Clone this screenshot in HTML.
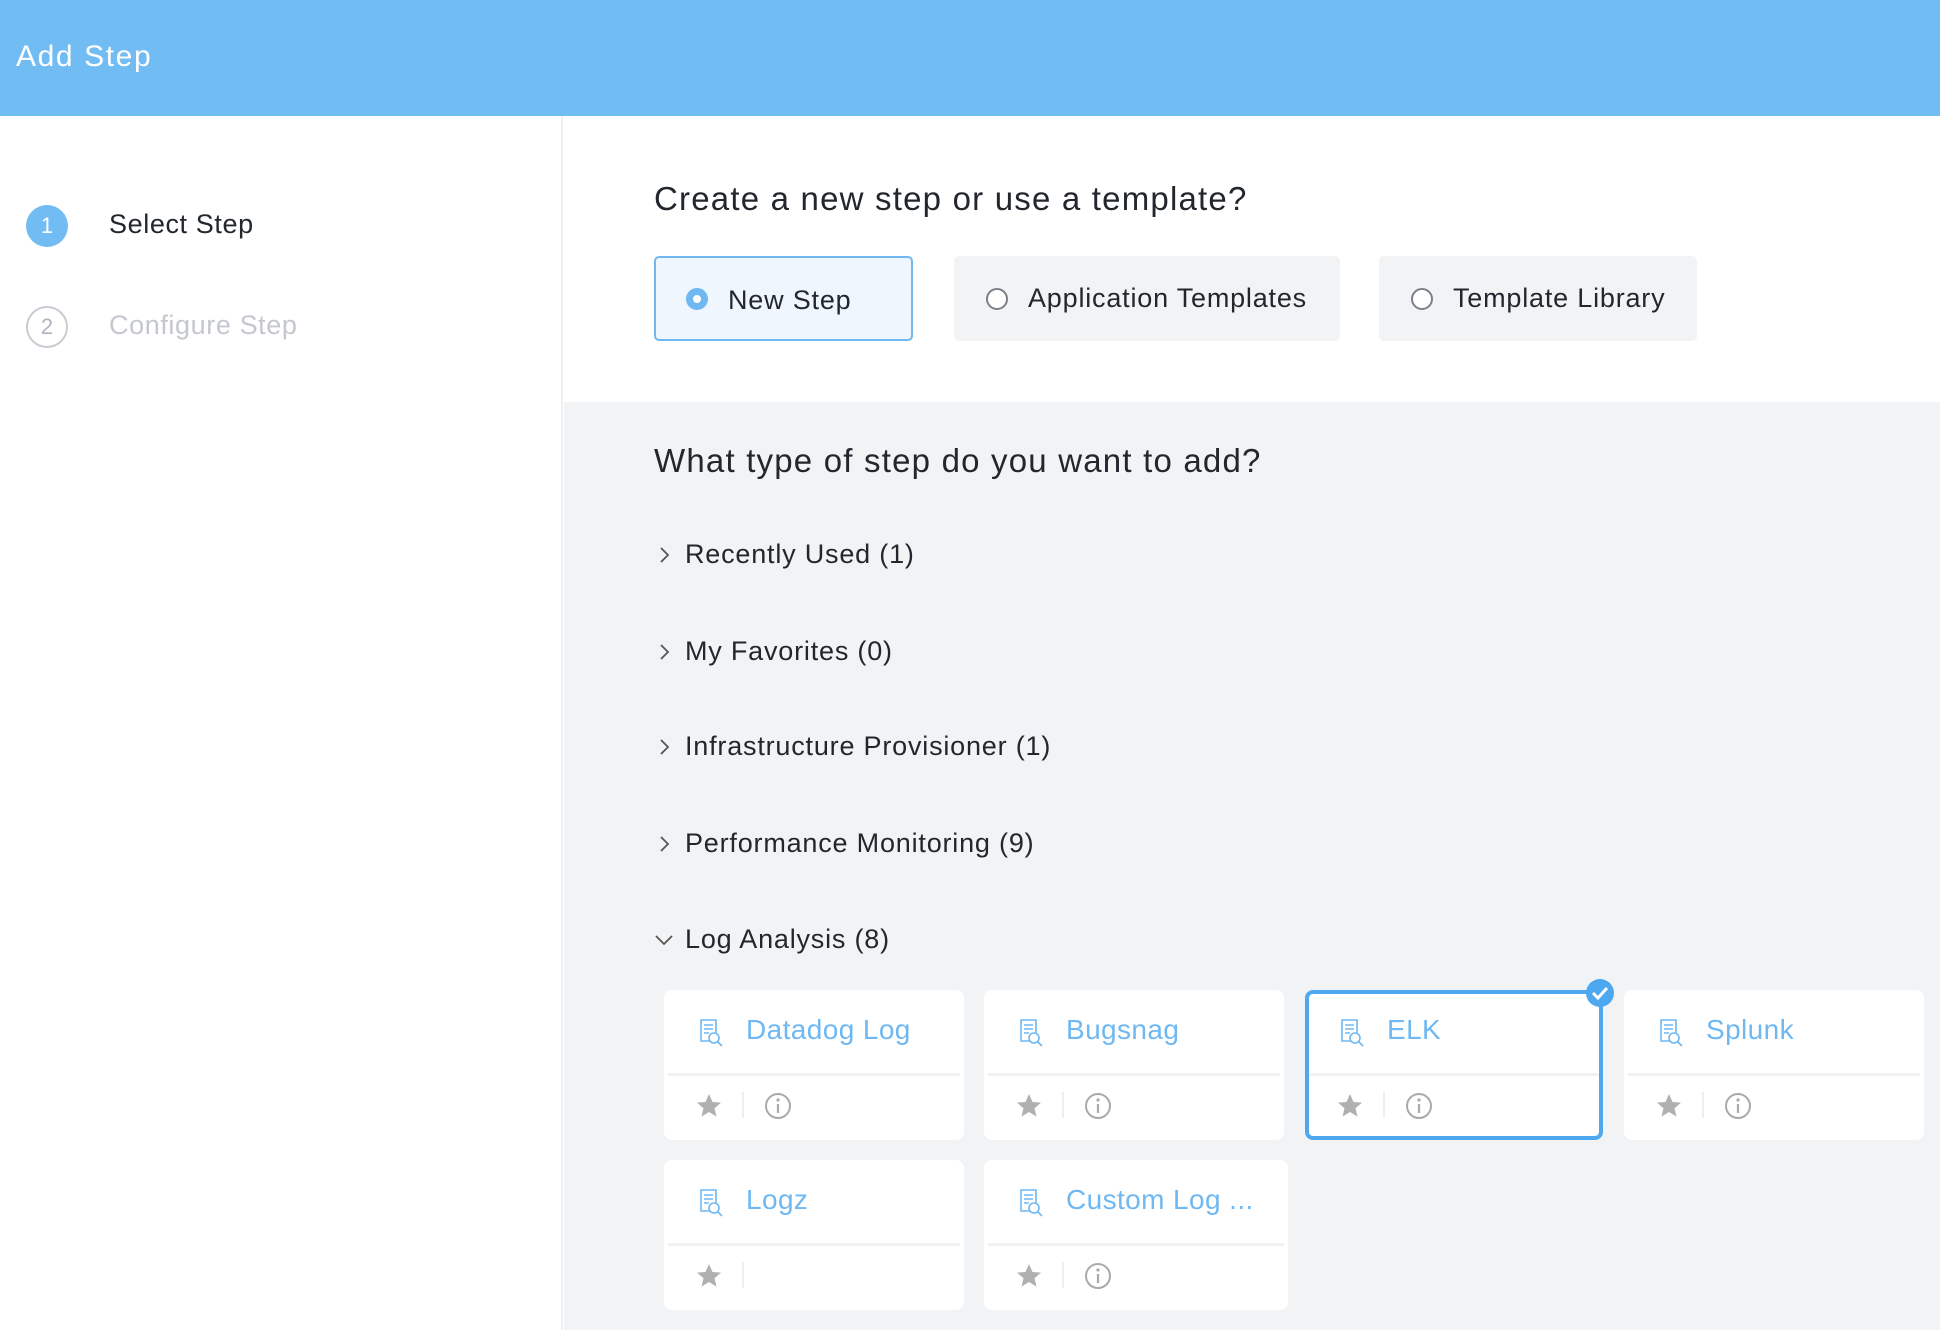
<!DOCTYPE html>
<html><head><meta charset="utf-8"><style>
*{margin:0;padding:0;box-sizing:border-box}
body{width:1940px;height:1330px;overflow:hidden;font-family:"Liberation Sans",sans-serif;background:#fff;position:relative;color:#22272e}
.hdr{position:absolute;left:0;top:0;width:1940px;height:116px;background:#72bcf4;color:#fff;font-size:30px;padding:40px 0 0 16px;letter-spacing:1.6px}
.side{position:absolute;left:0;top:116px;width:563px;height:1214px;border-right:2px solid #eef0f2}
.circ{position:absolute;width:42px;height:42px;border-radius:50%;text-align:center;line-height:42px;font-size:22px}
.lbl{position:absolute;font-size:27px;letter-spacing:0.6px}
.gray{position:absolute;left:564px;top:402px;width:1376px;height:928px;background:#f2f3f5}
.h{position:absolute;left:654px;font-size:33px;color:#22272e;letter-spacing:1.2px}
.btn{position:absolute;top:256px;height:85px;border-radius:5px;background:#f2f3f5;font-size:27px;line-height:85px;letter-spacing:0.8px}
.btn .r{position:absolute;left:32px;top:32px;width:22px;height:22px;border-radius:50%;border:2px solid #7b8089;background:#fff}
.btn span{position:absolute;left:74px}
.cat{position:absolute;left:658px;font-size:27px;height:34px;line-height:34px;letter-spacing:0.8px}
.cat svg{position:absolute;left:0;top:9px}
.cat span{position:absolute;left:27px;white-space:nowrap}
.card{position:absolute;background:#fff;border-radius:8px;height:150px}
.card .t{position:absolute;left:82px;top:24px;font-size:28px;color:#6fb8f2;white-space:nowrap;letter-spacing:0.4px}
.card .ic{position:absolute;left:35px;top:28px}
.card .dv{position:absolute;left:4px;right:4px;top:83px;height:3px;background:#f0f1f3}
.card .st{position:absolute;left:32px;top:103px}
.card .sp{position:absolute;left:78px;top:102px;width:2px;height:26px;background:#eceef0}
.card .in{position:absolute;left:100px;top:102px}
</style></head><body>
<div class="hdr">Add Step</div>
<div class="side">
<div class="circ" style="left:26px;top:89px;background:#72bcf4;color:#fff">1</div>
<div class="lbl" style="left:109px;top:93px">Select Step</div>
<div class="circ" style="left:26px;top:190px;border:2px solid #c8ccd3;color:#b0b5bd;line-height:38px">2</div>
<div class="lbl" style="left:109px;top:194px;color:#c4c8ce">Configure Step</div>
</div>
<div class="h" style="top:180px">Create a new step or use a template?</div>
<div class="btn" style="left:654px;width:259px;background:#eff6fe;border:2px solid #6fb8f2"><div class="r" style="border:7px solid #6fb8f2;left:30px;top:30px"></div><span style="left:72px">New Step</span></div>
<div class="btn" style="left:954px;width:386px"><div class="r"></div><span>Application Templates</span></div>
<div class="btn" style="left:1379px;width:318px"><div class="r"></div><span>Template Library</span></div>
<div class="gray"></div>
<div class="h" style="top:442px">What type of step do you want to add?</div>
<div class="cat" style="top:537px"><svg width="12" height="18"><path d="M3 2l7 7-7 7" fill="none" stroke="#555" stroke-width="1.8"/></svg><span>Recently Used (1)</span></div>
<div class="cat" style="top:634px"><svg width="12" height="18"><path d="M3 2l7 7-7 7" fill="none" stroke="#555" stroke-width="1.8"/></svg><span>My Favorites (0)</span></div>
<div class="cat" style="top:729px"><svg width="12" height="18"><path d="M3 2l7 7-7 7" fill="none" stroke="#555" stroke-width="1.8"/></svg><span>Infrastructure Provisioner (1)</span></div>
<div class="cat" style="top:826px"><svg width="12" height="18"><path d="M3 2l7 7-7 7" fill="none" stroke="#555" stroke-width="1.8"/></svg><span>Performance Monitoring (9)</span></div>
<div class="cat" style="top:922px;left:654px"><svg width="20" height="18"><path d="M2 5l8 8 8-8" fill="none" stroke="#555" stroke-width="1.8"/></svg><span style="left:31px">Log Analysis (8)</span></div>

<div class="card" style="left:664px;top:990px;width:300px"><svg class="ic" width="26" height="30"><path d="M2 2h15v21H2z M5 7h9M5 11h9M5 15h5" fill="none" stroke="#6fb8f2" stroke-width="1.6"/><circle cx="15" cy="20" r="5" fill="#fff" stroke="#6fb8f2" stroke-width="1.6"/><path d="M19 24l4 4" stroke="#6fb8f2" stroke-width="1.6"/></svg><div class="t">Datadog Log</div><div class="dv"></div><svg class="st" width="26" height="26"><path d="M13 1l3.5 8 8.5.6-6.5 5.6 2 8.4L13 19l-7.5 4.6 2-8.4L1 9.6 9.5 9z" fill="#b0b0b0"/></svg><div class="sp"></div><svg class="in" width="28" height="28"><circle cx="14" cy="14" r="12" fill="none" stroke="#aaa" stroke-width="2"/><circle cx="14" cy="8" r="1.6" fill="#aaa"/><path d="M14 12v9" stroke="#aaa" stroke-width="2.2"/></svg></div>
<div class="card" style="left:984px;top:990px;width:300px"><svg class="ic" width="26" height="30"><path d="M2 2h15v21H2z M5 7h9M5 11h9M5 15h5" fill="none" stroke="#6fb8f2" stroke-width="1.6"/><circle cx="15" cy="20" r="5" fill="#fff" stroke="#6fb8f2" stroke-width="1.6"/><path d="M19 24l4 4" stroke="#6fb8f2" stroke-width="1.6"/></svg><div class="t">Bugsnag</div><div class="dv"></div><svg class="st" width="26" height="26"><path d="M13 1l3.5 8 8.5.6-6.5 5.6 2 8.4L13 19l-7.5 4.6 2-8.4L1 9.6 9.5 9z" fill="#b0b0b0"/></svg><div class="sp"></div><svg class="in" width="28" height="28"><circle cx="14" cy="14" r="12" fill="none" stroke="#aaa" stroke-width="2"/><circle cx="14" cy="8" r="1.6" fill="#aaa"/><path d="M14 12v9" stroke="#aaa" stroke-width="2.2"/></svg></div>
<div class="card" style="left:1305px;top:990px;width:298px;border:4px solid #4ea8ef"><div style="position:absolute;left:-4px;top:-4px;width:298px;height:150px"><svg class="ic" width="26" height="30"><path d="M2 2h15v21H2z M5 7h9M5 11h9M5 15h5" fill="none" stroke="#6fb8f2" stroke-width="1.6"/><circle cx="15" cy="20" r="5" fill="#fff" stroke="#6fb8f2" stroke-width="1.6"/><path d="M19 24l4 4" stroke="#6fb8f2" stroke-width="1.6"/></svg><div class="t">ELK</div><div class="dv"></div><svg class="st" width="26" height="26"><path d="M13 1l3.5 8 8.5.6-6.5 5.6 2 8.4L13 19l-7.5 4.6 2-8.4L1 9.6 9.5 9z" fill="#b0b0b0"/></svg><div class="sp"></div><svg class="in" width="28" height="28"><circle cx="14" cy="14" r="12" fill="none" stroke="#aaa" stroke-width="2"/><circle cx="14" cy="8" r="1.6" fill="#aaa"/><path d="M14 12v9" stroke="#aaa" stroke-width="2.2"/></svg></div></div>
<svg style="position:absolute;left:1586px;top:979px" width="28" height="28"><circle cx="14" cy="14" r="14" fill="#4ea8ef"/><path d="M7 14l5 5 9-10" fill="none" stroke="#fff" stroke-width="3"/></svg>
<div class="card" style="left:1624px;top:990px;width:300px"><svg class="ic" width="26" height="30"><path d="M2 2h15v21H2z M5 7h9M5 11h9M5 15h5" fill="none" stroke="#6fb8f2" stroke-width="1.6"/><circle cx="15" cy="20" r="5" fill="#fff" stroke="#6fb8f2" stroke-width="1.6"/><path d="M19 24l4 4" stroke="#6fb8f2" stroke-width="1.6"/></svg><div class="t">Splunk</div><div class="dv"></div><svg class="st" width="26" height="26"><path d="M13 1l3.5 8 8.5.6-6.5 5.6 2 8.4L13 19l-7.5 4.6 2-8.4L1 9.6 9.5 9z" fill="#b0b0b0"/></svg><div class="sp"></div><svg class="in" width="28" height="28"><circle cx="14" cy="14" r="12" fill="none" stroke="#aaa" stroke-width="2"/><circle cx="14" cy="8" r="1.6" fill="#aaa"/><path d="M14 12v9" stroke="#aaa" stroke-width="2.2"/></svg></div>
<div class="card" style="left:664px;top:1160px;width:300px"><svg class="ic" width="26" height="30"><path d="M2 2h15v21H2z M5 7h9M5 11h9M5 15h5" fill="none" stroke="#6fb8f2" stroke-width="1.6"/><circle cx="15" cy="20" r="5" fill="#fff" stroke="#6fb8f2" stroke-width="1.6"/><path d="M19 24l4 4" stroke="#6fb8f2" stroke-width="1.6"/></svg><div class="t">Logz</div><div class="dv"></div><svg class="st" width="26" height="26"><path d="M13 1l3.5 8 8.5.6-6.5 5.6 2 8.4L13 19l-7.5 4.6 2-8.4L1 9.6 9.5 9z" fill="#b0b0b0"/></svg><div class="sp"></div></div>
<div class="card" style="left:984px;top:1160px;width:304px"><svg class="ic" width="26" height="30"><path d="M2 2h15v21H2z M5 7h9M5 11h9M5 15h5" fill="none" stroke="#6fb8f2" stroke-width="1.6"/><circle cx="15" cy="20" r="5" fill="#fff" stroke="#6fb8f2" stroke-width="1.6"/><path d="M19 24l4 4" stroke="#6fb8f2" stroke-width="1.6"/></svg><div class="t">Custom Log ...</div><div class="dv"></div><svg class="st" width="26" height="26"><path d="M13 1l3.5 8 8.5.6-6.5 5.6 2 8.4L13 19l-7.5 4.6 2-8.4L1 9.6 9.5 9z" fill="#b0b0b0"/></svg><div class="sp"></div><svg class="in" width="28" height="28"><circle cx="14" cy="14" r="12" fill="none" stroke="#aaa" stroke-width="2"/><circle cx="14" cy="8" r="1.6" fill="#aaa"/><path d="M14 12v9" stroke="#aaa" stroke-width="2.2"/></svg></div>
</body></html>
